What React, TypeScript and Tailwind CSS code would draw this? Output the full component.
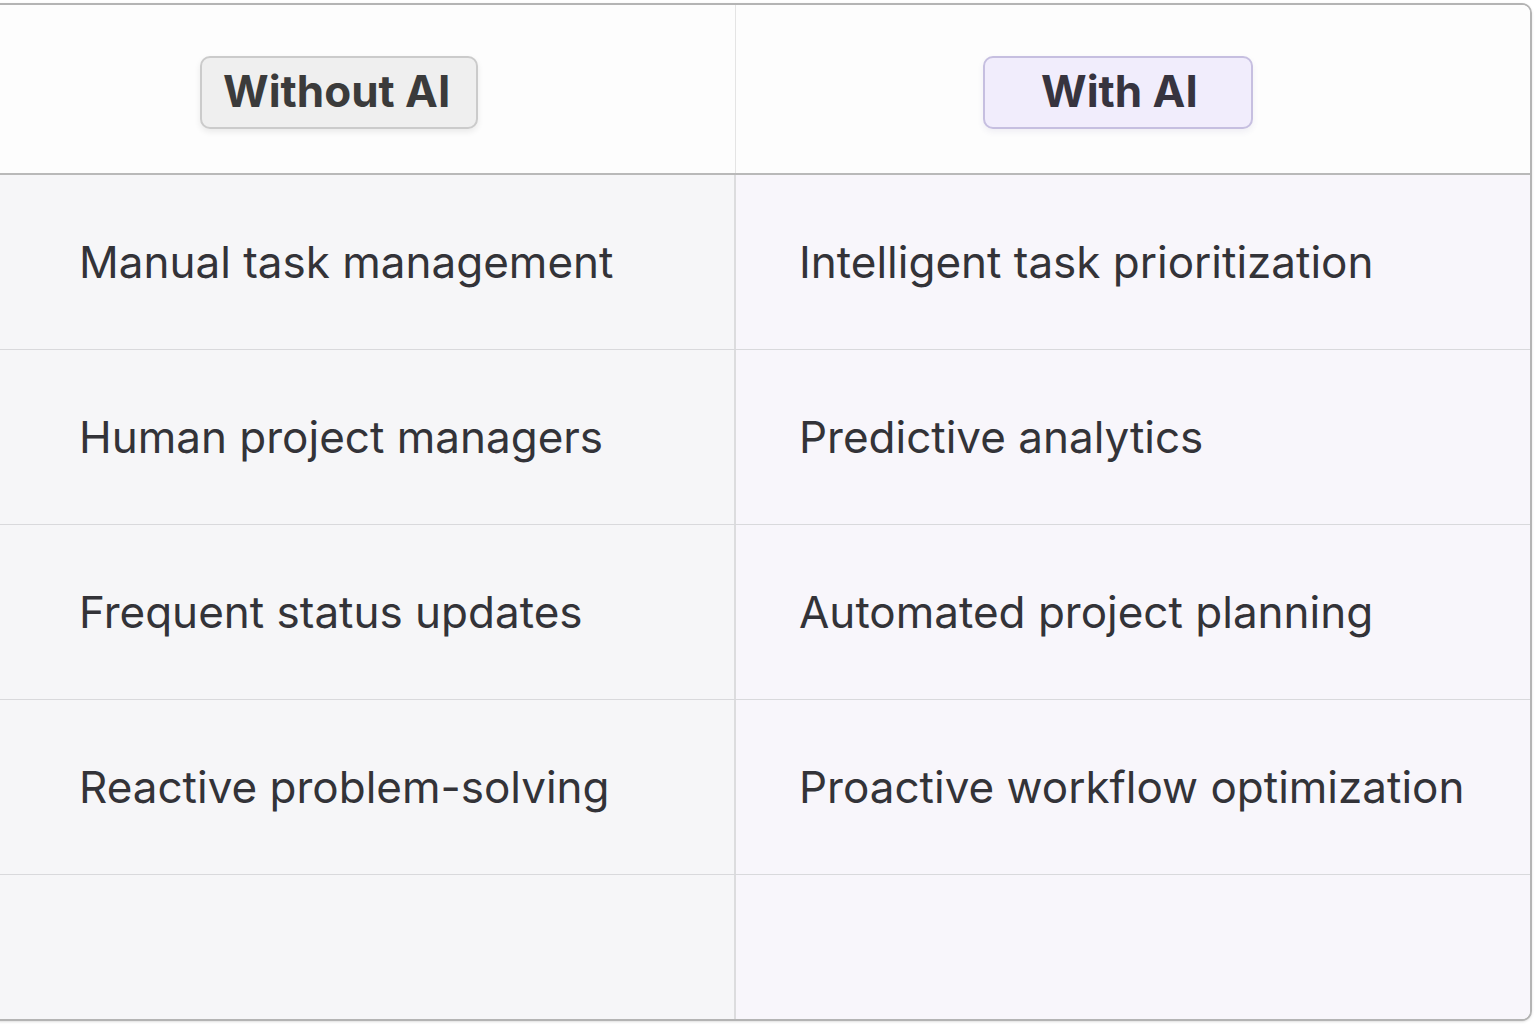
const rows = [
  ["Manual task management", "Intelligent task prioritization"],
  ["Human project managers", "Predictive analytics"],
  ["Frequent status updates", "Automated project planning"],
  ["Reactive problem-solving", "Proactive workflow optimization"],
  ["", ""],
];

export default function App() {
  return (
    <div className="min-h-screen bg-white pt-[3px]" style={{ fontFamily: "Inter, 'Noto Sans', sans-serif" }}>
      <div className="w-[1534px] -ml-[2px] h-[1018px] overflow-hidden rounded-r-[10px] border-2 border-[#b4b4b4] bg-white shadow-sm">
        {/* header */}
        <div className="grid h-[170px] grid-cols-[736px_1fr] border-b-2 border-[#b9b9b9] bg-[#fdfdfd]">
          <div className="flex items-center border-r border-[#e4e4e4] pl-[200px] pt-[6px]">
            <span className="rounded-[10px] border-2 border-[#cbcbcb] bg-[#efefef] pb-[9px] pl-[21px] pr-[26px] pt-[6px] text-[44px] font-bold leading-[54px] text-[#3b3b3b] shadow-[0_3px_6px_rgba(0,0,0,0.08)]">
              Without AI
            </span>
          </div>
          <div className="flex items-center pl-[247px] pt-[6px]">
            <span className="rounded-[10px] border-2 border-[#c6bfe0] bg-[#f1edfc] pb-[9px] pl-[56px] pr-[53px] pt-[6px] text-[44px] font-bold leading-[54px] text-[#37343f] shadow-[0_3px_6px_rgba(80,60,140,0.08)]">
              With AI
            </span>
          </div>
        </div>

        {/* body rows */}
        {rows.map(([left, right], i) => (
          <div
            key={i}
            className={`grid h-[175px] grid-cols-[736px_1fr] ${i < rows.length - 1 ? "border-b border-[#d9d9dc]" : ""}`}
          >
            <div className="flex items-center border-r-2 border-[#dcdcde] bg-[#f6f6f8] pl-[79px] text-[44px] text-[#333338]">
              {left}
            </div>
            <div className="flex items-center bg-[#f8f6fb] pl-[63px] text-[44px] text-[#333338]">
              {right}
            </div>
          </div>
        ))}
      </div>
    </div>
  );
}
